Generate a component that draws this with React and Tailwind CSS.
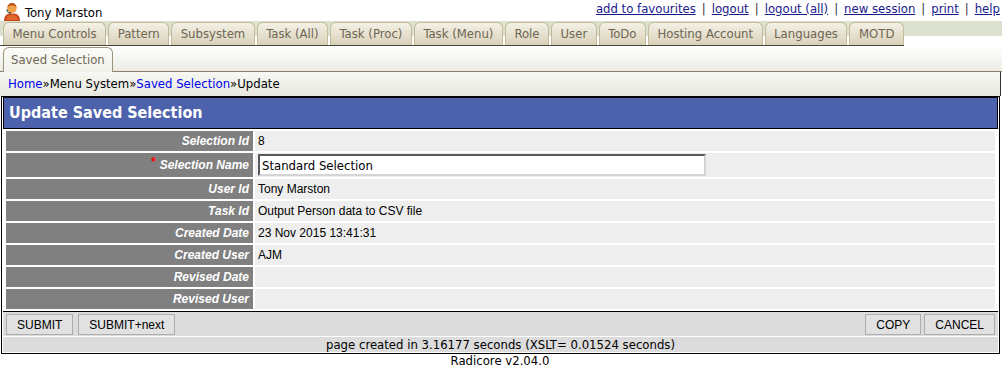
import React from 'react';

// Radicore "Update Saved Selection" screen

const TABS = [
  'Menu Controls', 'Pattern', 'Subsystem', 'Task (All)', 'Task (Proc)', 'Task (Menu)',
  'Role', 'User', 'ToDo', 'Hosting Account', 'Languages', 'MOTD'
];

const LINKS = ['add to favourites', 'logout', 'logout (all)', 'new session', 'print', 'help'];

const ROWS = [
  { label: 'Selection Id', value: '8' },
  { label: 'Selection Name', input: 'Standard Selection', required: true },
  { label: 'User Id', value: 'Tony Marston' },
  { label: 'Task Id', value: 'Output Person data to CSV file' },
  { label: 'Created Date', value: '23 Nov 2015 13:41:31' },
  { label: 'Created User', value: 'AJM' },
  { label: 'Revised Date', value: '' },
  { label: 'Revised User', value: '' },
];

const UserIcon = () => (
  <svg width="18" height="19" viewBox="0 0 18 19">
    <path d="M1 19 C1 13 4 11.5 9 11.5 C14 11.5 17 13 17 19 Z" fill="#c8481c" />
    <path d="M3 18 C3.5 14 5.5 13 9 13 C12.5 13 14.5 14 15 18 Z" fill="#e0662e" />
    <circle cx="9" cy="6.5" r="4.6" fill="#f0a24a" />
    <path d="M4.4 6 C4.4 2.5 6.5 1 9 1 C11.5 1 13.6 2.5 13.6 6 C12.5 4 11 3.5 9 3.5 C7 3.5 5.5 4 4.4 6 Z" fill="#b8561c" />
    <path d="M4.2 7 L4.2 9.5 L6.5 11" stroke="#3a3a3a" strokeWidth="1" fill="none" />
    <circle cx="7" cy="11" r="0.9" fill="#3a3a3a" />
  </svg>
);

const Btn = ({ children }) => (
  <button
    type="button"
    className="h-[21px] px-[10px] bg-[#e1e1e1] border border-[#adadad] text-[12px] leading-none text-black font-['Liberation_Sans',Arial,sans-serif]"
  >
    {children}
  </button>
);

export default function App() {
  return (
    <div className="w-[1002px] h-[368px] bg-white text-black font-['DejaVu_Sans_Condensed','DejaVu_Sans',sans-serif] overflow-hidden">
      {/* Top row: user + links */}
      <div className="flex justify-between items-start h-[21px]">
        <div className="flex items-end gap-[4px] pl-[3px] pt-[2px]">
          <UserIcon />
          <span className="text-[13px] leading-[15px] pb-[1px]">Tony Marston</span>
        </div>
        <div className="flex items-center pr-[2px] pt-[1px] text-[13px] leading-[16px]">
          {LINKS.map((l, i) => (
            <React.Fragment key={l}>
              {i > 0 && <span className="text-[#333] px-[6px]">|</span>}
              <a href="#" className="text-[#1a1a8c] underline">{l}</a>
            </React.Fragment>
          ))}
        </div>
      </div>

      {/* Top level tabs */}
      <div className="h-[25px] bg-gradient-to-b from-[#dbe0cf] from-60% to-white to-60%">
        <div className="inline-flex items-end gap-[2px] pl-[3px] h-[25px] border-b border-[#4a463c]">
          {TABS.map((t) => (
            <div
              key={t}
              className="h-[23px] px-[8.5px] flex items-center rounded-t-[6px] border border-b-0 border-[#c4ba9c] bg-gradient-to-b from-[#f4f1e6] to-[#d8d1b9] text-[13px] text-[#6f6553] whitespace-nowrap"
            >
              {t}
            </div>
          ))}
        </div>
      </div>

      {/* Second level tabs */}
      <div className="flex items-end h-[26px] bg-gradient-to-b from-white to-[#ebebe3]">
        <div className="w-[3px] h-full border-b border-[#8c806a]" />
        <div className="h-[25px] px-[7px] flex items-center rounded-t-[6px] border border-b-0 border-[#9d927c] bg-gradient-to-b from-[#fbfbf8] to-[#f2f2ec] text-[13px] text-[#6f6553] whitespace-nowrap">
          Saved Selection
        </div>
        <div className="flex-1 h-full border-b border-[#8c806a]" />
      </div>

      {/* Breadcrumbs */}
      <div className="w-[1001px] h-[24px] flex items-center pl-[8px] bg-gradient-to-b from-[#f8f8f4] to-[#e7e7df] border-r border-[#333] text-[13px]">
        <a href="#" className="text-[#0000ee]">Home</a>
        <span>»Menu System»</span>
        <a href="#" className="text-[#0000ee]">Saved Selection</a>
        <span>»Update</span>
      </div>

      {/* Form */}
      <div className="ml-[1px] w-[999px] border border-black p-[1px] pt-0">
        <div className="h-[32px] flex items-center pl-[5px] bg-[#4d62ad] border border-black text-white text-[16px] font-bold">
          Update Saved Selection
        </div>
        <table className="w-full border-separate border-spacing-[2px] px-[1px] font-['Liberation_Sans',Arial,sans-serif] text-[12px]">
          <tbody>
            {ROWS.map((r) => (
              <tr key={r.label}>
                <td className="w-[247px] bg-[#808080] text-white font-bold italic text-right pr-[4px] py-0 h-[20px] align-middle">
                  {r.required && (
                    <span className="text-[#ff0000] not-italic align-top text-[12px] leading-none mr-[4px]">*</span>
                  )}
                  {r.label}
                </td>
                <td className="bg-[#eeeeee] pl-[3px] h-[20px] align-middle">
                  {r.input ? (
                    <div className="py-[1px]">
                      <input
                        type="text"
                        defaultValue={r.input}
                        className="w-[448px] h-[22px] px-[2px] bg-white border-2 border-t-[#5a5a5a] border-l-[#5a5a5a] border-b-[#d4d4d4] border-r-[#d4d4d4] text-[13px] font-['DejaVu_Sans_Condensed','DejaVu_Sans',sans-serif] text-black outline-none"
                      />
                    </div>
                  ) : (
                    r.value
                  )}
                </td>
              </tr>
            ))}
          </tbody>
        </table>
        <div className="border-t border-black bg-[#dcdcdc] h-[25px] flex items-center justify-between px-[3px] pt-[1px]">
          <div className="flex gap-[5px]">
            <Btn>SUBMIT</Btn>
            <Btn>SUBMIT+next</Btn>
          </div>
          <div className="flex gap-[3px]">
            <Btn>COPY</Btn>
            <Btn>CANCEL</Btn>
          </div>
        </div>
        <div className="border-t border-white bg-[#dcdcdc] h-[16px] flex items-center justify-center text-[13px] leading-[15px]">
          page created in 3.16177 seconds (XSLT= 0.01524 seconds)
        </div>
      </div>
      <div className="text-center text-[13px] leading-[14px] pr-[2px]">Radicore v2.04.0</div>
    </div>
  );
}
